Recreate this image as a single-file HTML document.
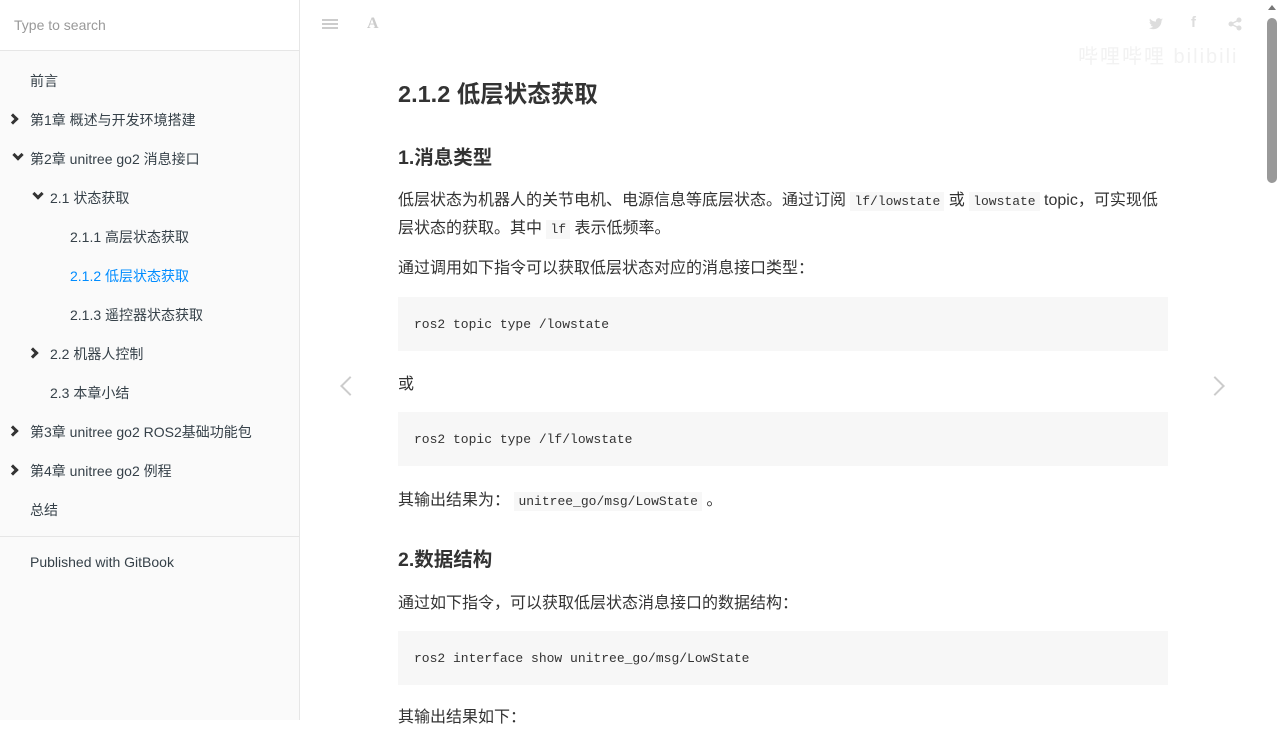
<!DOCTYPE html>
<html><head><meta charset="utf-8">
<style>
*{margin:0;padding:0;box-sizing:border-box}
body{width:1280px;height:720px;overflow:hidden;background:#fff;font-family:"Liberation Sans","Noto Sans CJK SC",sans-serif;color:#333;position:relative}
.side{position:absolute;left:0;top:0;width:300px;height:720px;background:#fafafa;border-right:1px solid #e6e6e6}
.search{height:51px;background:#fff;border-bottom:1px solid #e6e6e6;padding:17px 14px;font-size:14px;color:#999}
.item{position:absolute;font-size:14px;color:#364149;white-space:nowrap;line-height:18px}
.item.active{color:#008cff}
.chev{position:absolute;width:8px;height:8px;border-right:3px solid #333;border-bottom:3px solid #333}
.r{transform:rotate(-45deg)}
.d{transform:rotate(45deg)}
.sep{position:absolute;left:0;width:299px;border-top:1px solid #e6e6e6;top:536px}
.main{position:absolute;left:398px;top:0;width:770px}
h1{position:absolute;top:75px;font-size:23.5px;font-weight:bold;color:#333;white-space:nowrap}
h2{position:absolute;font-size:19.5px;font-weight:bold;color:#333;white-space:nowrap}
p{position:absolute;font-size:16px;line-height:27px;width:770px}
code{font-family:"Liberation Mono",monospace;font-size:13px;background:#f7f7f7;padding:2px 4px}
.pre{position:absolute;left:0;width:770px;height:54px;background:#f7f7f7;font-family:"Liberation Mono",monospace;font-size:13px;padding:20px 16px;color:#333}
.arrow{position:absolute;width:14px;height:14px;border-left:2px solid #ccc;border-bottom:2px solid #ccc}
</style></head><body>
<div class="side">
<div class="search">Type to search</div>
<div class="item" style="left:30px;top:72px">前言</div>
<div class="chev r" style="left:9px;top:115px"></div>
<div class="item" style="left:30px;top:111px">第1章 概述与开发环境搭建</div>
<div class="chev d" style="left:14px;top:151px"></div>
<div class="item" style="left:30px;top:150px">第2章 unitree go2 消息接口</div>
<div class="chev d" style="left:34px;top:190px"></div>
<div class="item" style="left:50px;top:189px">2.1 状态获取</div>
<div class="item" style="left:70px;top:228px">2.1.1 高层状态获取</div>
<div class="item active" style="left:70px;top:267px">2.1.2 低层状态获取</div>
<div class="item" style="left:70px;top:306px">2.1.3 遥控器状态获取</div>
<div class="chev r" style="left:29px;top:349px"></div>
<div class="item" style="left:50px;top:345px">2.2 机器人控制</div>
<div class="item" style="left:50px;top:384px">2.3 本章小结</div>
<div class="chev r" style="left:9px;top:427px"></div>
<div class="item" style="left:30px;top:423px">第3章 unitree go2 ROS2基础功能包</div>
<div class="chev r" style="left:9px;top:466px"></div>
<div class="item" style="left:30px;top:462px">第4章 unitree go2 例程</div>
<div class="item" style="left:30px;top:501px">总结</div>
<div class="sep"></div>
<div class="item" style="left:30px;top:553px">Published with GitBook</div>
</div>

<svg style="position:absolute;left:322px;top:18px" width="16" height="14"><g stroke="#ccc" stroke-width="2"><line x1="0" y1="2" x2="16" y2="2"/><line x1="0" y1="6" x2="16" y2="6"/><line x1="0" y1="10" x2="16" y2="10"/></g></svg>
<div style="position:absolute;left:367px;top:15px;font-family:'Liberation Serif',serif;font-weight:bold;font-size:16px;color:#ccc">A</div>
<svg style="position:absolute;left:1149px;top:18px" width="14" height="12" viewBox="0 0 14 12"><path d="M14 1.5c-.5.2-1 .4-1.6.4.6-.4 1-.9 1.2-1.5-.5.3-1.1.6-1.8.7A2.8 2.8 0 0 0 7 3.6 8 8 0 0 1 1 .6a2.8 2.8 0 0 0 .9 3.8c-.5 0-.9-.2-1.3-.4 0 1.4 1 2.5 2.3 2.8-.4.1-.9.1-1.3 0 .4 1.1 1.4 1.9 2.6 2A5.7 5.7 0 0 1 0 10c1.2.8 2.7 1.2 4.3 1.2 5.3 0 8.2-4.4 8.2-8.2v-.4c.6-.4 1.1-.9 1.5-1.1z" fill="#ddd"/></svg>
<div style="position:absolute;left:1191px;top:14px;font-size:15px;font-weight:bold;color:#ddd">f</div>
<svg style="position:absolute;left:1228px;top:17px" width="14" height="14"><g fill="#ddd"><circle cx="11" cy="3" r="2.5"/><circle cx="3" cy="7" r="2.5"/><circle cx="11" cy="11" r="2.5"/></g><g stroke="#ddd" stroke-width="1.5"><line x1="3" y1="7" x2="11" y2="3"/><line x1="3" y1="7" x2="11" y2="11"/></g></svg>
<div style="position:absolute;left:1078px;top:40px;font-size:20px;color:#f2f2f2;letter-spacing:2px">哔哩哔哩 bilibili</div>

<div style="position:absolute;left:1267px;top:18px;width:10px;height:165px;background:#999;border-radius:5px"></div>
<div style="position:absolute;left:1268px;top:5px;width:0;height:0;border-left:4px solid transparent;border-right:4px solid transparent;border-bottom:5px solid #777"></div>

<div class="arrow" style="left:343px;top:379px;transform:rotate(45deg)"></div>
<div class="arrow" style="left:1208px;top:379px;transform:rotate(-135deg)"></div>

<div class="main">
<h1>2.1.2 低层状态获取</h1>
<h2 style="top:141px">1.消息类型</h2>
<p style="top:187px">低层状态为机器人的关节电机、电源信息等底层状态。通过订阅 <code>lf/lowstate</code> 或 <code>lowstate</code> topic，可实现低层状态的获取。其中 <code>lf</code> 表示低频率。</p>
<p style="top:255px">通过调用如下指令可以获取低层状态对应的消息接口类型：</p>
<div class="pre" style="top:297px">ros2 topic type /lowstate</div>
<p style="top:371px">或</p>
<div class="pre" style="top:412px">ros2 topic type /lf/lowstate</div>
<p style="top:487px">其输出结果为： <code>unitree_go/msg/LowState</code> 。</p>
<h2 style="top:543px">2.数据结构</h2>
<p style="top:590px">通过如下指令，可以获取低层状态消息接口的数据结构：</p>
<div class="pre" style="top:631px">ros2 interface show unitree_go/msg/LowState</div>
<p style="top:704px">其输出结果如下：</p>
</div>
</body></html>
